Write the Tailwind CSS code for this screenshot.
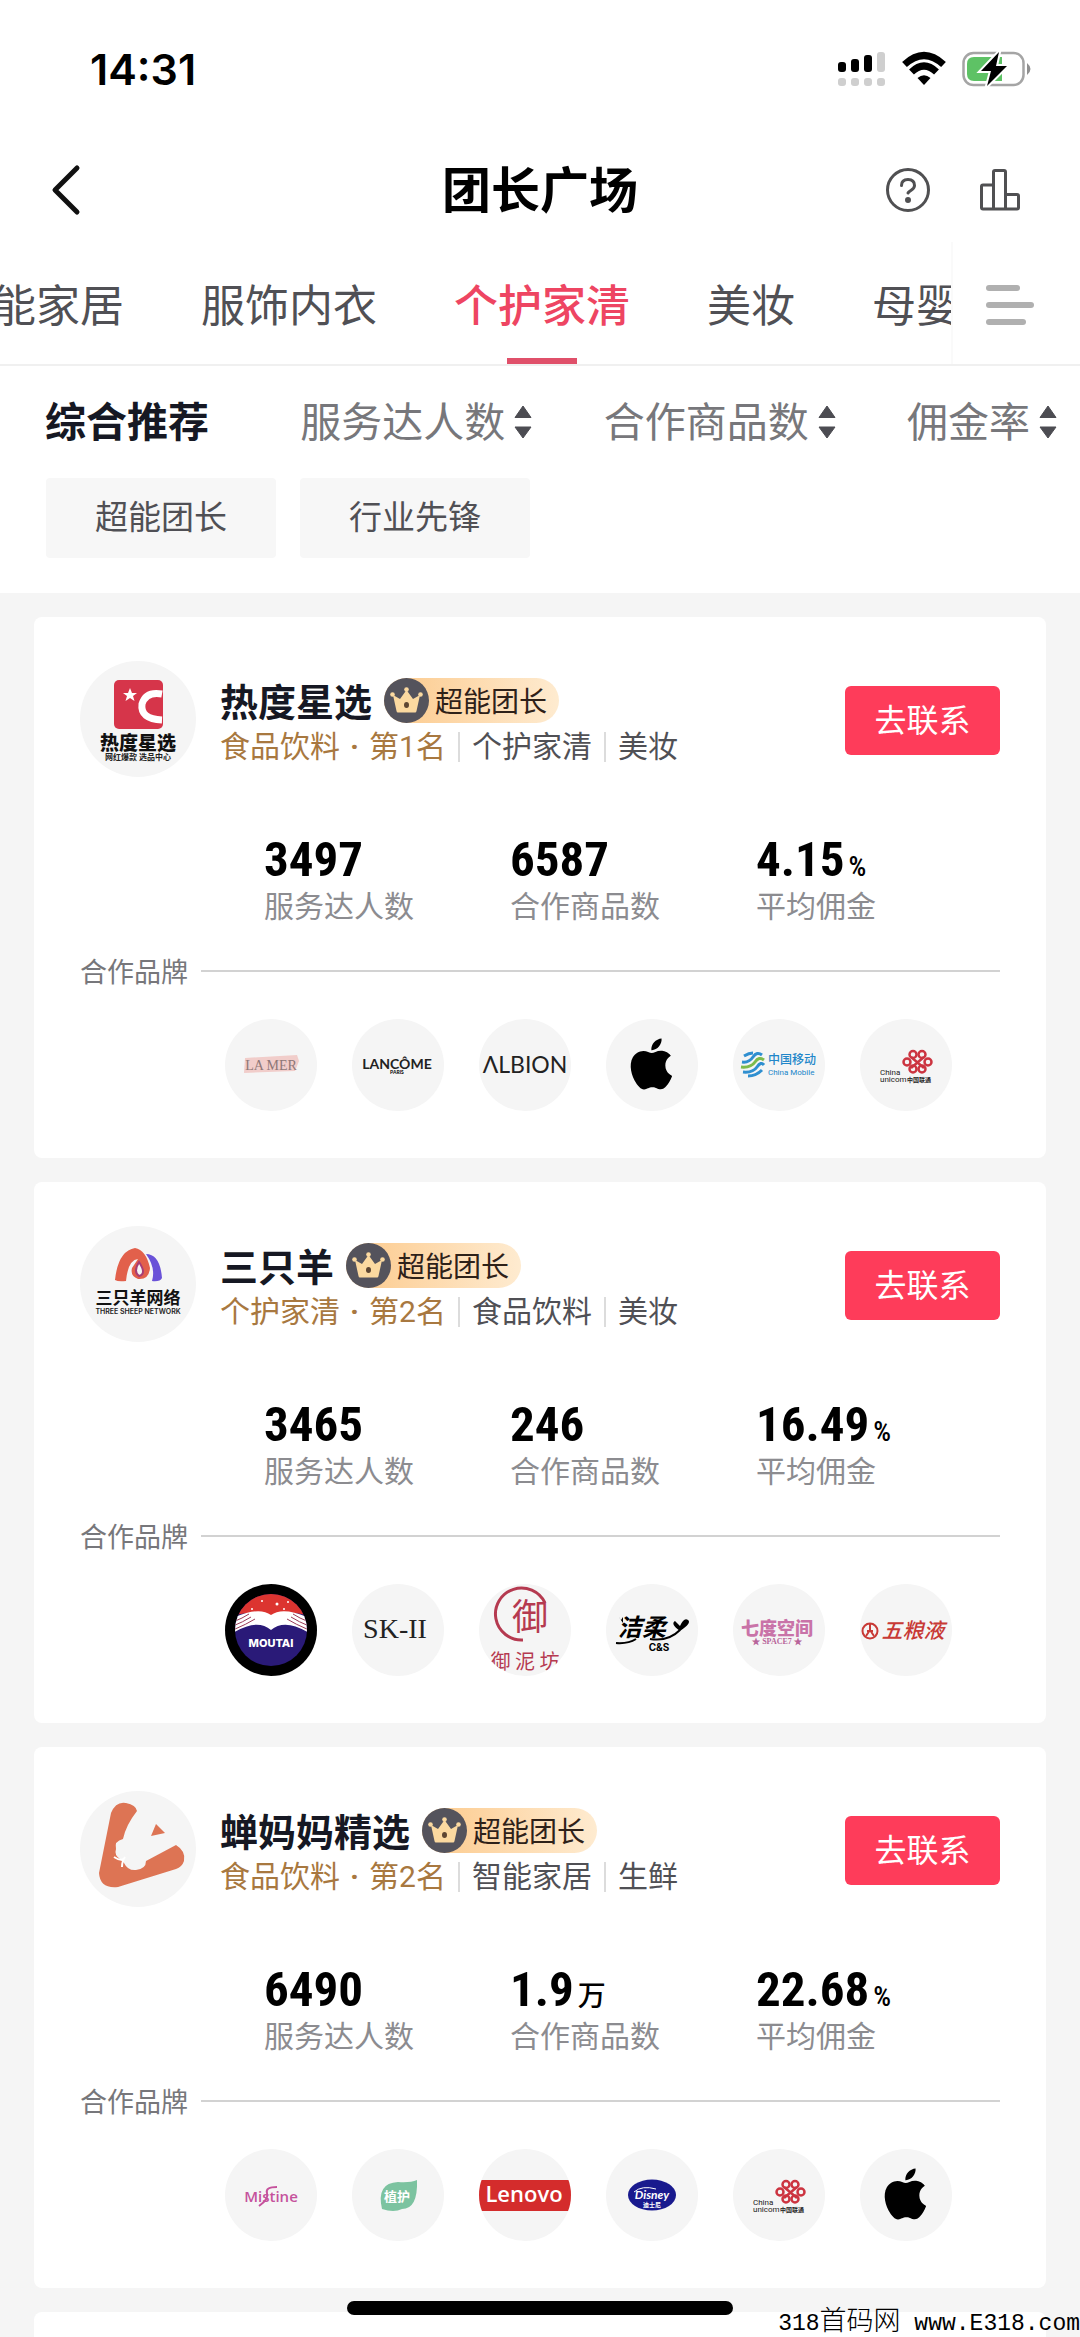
<!DOCTYPE html>
<html lang="zh-CN">
<head>
  <meta charset="UTF-8" />
  <meta name="viewport" content="width=device-width, initial-scale=1.0"/>
  <title>团长广场</title>
  <script src="https://cdn.jsdelivr.net/npm/@tailwindcss/browser@4"></script>
</head>
<body class="relative flex h-screen flex-col overflow-hidden bg-[#f5f5f5] font-['Noto_Sans_CJK_SC',sans-serif] text-[#161823]">

  <!-- shared icons -->
  <svg class="hidden">
    <symbol id="arrows" viewBox="0 0 18 34">
      <path d="M9 1 17 12.500H1zM9 33 1 22H17z" fill="#4c4c52" stroke="#4c4c52" stroke-linejoin="round"/>
    </symbol>
    <symbol id="crown" viewBox="0 0 45 45">
      <circle cx="22.500" cy="22.500" r="22.500" fill="#54535c"/>
      <path d="M9 17 16 21 22.500 12 29 21 36 17 32.500 33Q32.300 34.500 31 34.500H14Q12.700 34.500 12.500 33z" fill="#fbd9a0"/>
      <circle cx="8.500" cy="16.500" r="2.300" fill="#fbd9a0"/>
      <circle cx="22.500" cy="11.500" r="2.300" fill="#fbd9a0"/>
      <circle cx="36.500" cy="16.500" r="2.300" fill="#fbd9a0"/>
      <ellipse cx="22.500" cy="27" rx="2.500" ry="3" fill="#5d4632"/>
    </symbol>
    <symbol id="apple" viewBox="0 0 92 92">
      <path transform="translate(20 19.500) scale(2.120)" d="M12.152 6.896c-.948 0-2.415-1.078-3.960-1.040-2.040.027-3.910 1.183-4.961 3.014-2.117 3.675-.546 9.103 1.519 12.090 1.013 1.454 2.208 3.090 3.792 3.039 1.520-.065 2.090-.987 3.935-.987 1.831 0 2.350.987 3.960.948 1.637-.026 2.676-1.480 3.676-2.948 1.156-1.688 1.636-3.325 1.662-3.415-.039-.013-3.182-1.221-3.220-4.857-.026-3.040 2.480-4.494 2.597-4.559-1.429-2.090-3.623-2.324-4.390-2.376-2-.156-3.675 1.090-4.610 1.090zM15.530 3.830c.843-1.012 1.400-2.427 1.245-3.830-1.207.052-2.662.805-3.532 1.818-.780.896-1.454 2.338-1.273 3.714 1.338.104 2.715-.688 3.559-1.701"/>
    </symbol>
    <symbol id="unicom" viewBox="0 0 92 92">
      <g fill="none" stroke="#cc3440" stroke-width="2.500">
        <path d="M51 38 64 49M64 38 51 49"/>
        <circle cx="53" cy="35.500" r="3.500"/><circle cx="62" cy="35.500" r="3.500"/>
        <circle cx="53" cy="50" r="3.500"/><circle cx="62" cy="50" r="3.500"/>
        <circle cx="47" cy="43" r="3.500"/><circle cx="68" cy="43" r="3.500"/>
      </g>
      <text x="20" y="56" font-size="8" font-family="Roboto" fill="#222">China</text>
      <text x="20" y="63" font-size="8" font-family="Roboto" fill="#222">unicom</text>
      <text x="47" y="63" font-size="6" font-weight="700" fill="#222">中国联通</text>
    </symbol>
  </svg>

  <header class="bg-white">
    <!-- status bar -->
    <div class="flex h-[138px] items-center justify-between pr-[48px] pl-[90px]">
      <span class="font-['Inter',sans-serif] text-[43px] font-semibold text-black">14:31</span>
      <div class="flex items-center gap-4">
        <svg class="h-[36px] w-[48px]" viewBox="0 0 48 36">
          <rect x="0" y="11" width="8" height="10" rx="3"/><rect x="13" y="8" width="8" height="13" rx="3"/><rect x="26" y="4" width="8" height="17" rx="3"/>
          <g fill="#cfcfcf"><rect x="39" y="1" width="8" height="20" rx="3"/><rect x="0" y="27" width="8" height="8" rx="3"/><rect x="13" y="27" width="8" height="8" rx="3"/><rect x="26" y="27" width="8" height="8" rx="3"/><rect x="39" y="27" width="8" height="8" rx="3"/></g>
        </svg>
        <svg class="h-[36px] w-[44px]" viewBox="0 0 44 36" fill="none" stroke="#000" stroke-width="7">
          <path d="M2.500 13.500Q22-4.500 41.500 13.500"/><path d="M9.500 21Q22 9 34.500 21"/>
          <path d="M22 34 15.500 27Q22 21.500 28.500 27z" fill="#000" stroke="none"/>
        </svg>
        <svg class="h-[36px] w-[70px]" viewBox="0 0 70 36">
          <rect x="1.500" y="2" width="60" height="32" rx="10" fill="#fff" stroke="#a5a5a5" stroke-width="2.500"/>
          <path d="M12 6H40V30H12Q5 30 5 23V13Q5 6 12 6z" fill="#5ec265"/>
          <path d="M65 12Q72 18 65 24z" fill="#8f8f8f"/>
          <path d="M37 1 19 20H29L25 35 45 15H34z" stroke="#fff" stroke-width="4" paint-order="stroke"/>
        </svg>
      </div>
    </div>

    <!-- title bar -->
    <div class="grid h-[104px] grid-cols-3 items-center px-[50px]">
      <button type="button" aria-label="返回" class="justify-self-start">
        <svg class="h-[52px] w-[32px]" viewBox="0 0 32 52" fill="none" stroke="#111" stroke-width="5" stroke-linecap="round" stroke-linejoin="round"><path d="M27 4 5 26 27 48"/></svg>
      </button>
      <h1 class="pb-[8px] text-center text-[49px] leading-none font-bold text-black">团长广场</h1>
      <div class="flex items-center justify-end gap-[48px] pr-[9px]">
        <button type="button" aria-label="帮助">
          <svg class="size-[46px]" viewBox="0 0 46 46" fill="none" stroke="#505052" stroke-width="3" stroke-linecap="round"><circle cx="23" cy="23" r="20.500"/><path d="M16.500 18.500Q16.500 12.500 23 12.500T29.500 18.500Q29.500 21 26.500 23T23 26"/><circle cx="23" cy="33" r="1.500" fill="#505052"/></svg>
        </button>
        <button type="button" aria-label="榜单">
          <svg class="h-[46px] w-[42px]" viewBox="0 0 42 46" fill="none" stroke="#505052" stroke-width="3" stroke-linejoin="round"><path d="M14.500 42V5Q14.500 3.500 16 3.500H25Q26.500 3.500 26.500 5V42M14.500 18H4Q2.500 18 2.500 19.500V40.500Q2.500 42 4 42H38Q39.500 42 39.500 40.500V29Q39.500 27.500 38 27.500H26.500"/></svg>
        </button>
      </div>
    </div>

    <!-- category tabs -->
    <div class="flex h-[124px] border-b-2 border-[#f0f0f0]">
      <nav class="flex flex-1 justify-start gap-[77px] overflow-hidden text-[44px] leading-[122px] whitespace-nowrap text-[#505055]">
        <a href="#" class="-ml-[52px]">智能家居</a>
        <a href="#">服饰内衣</a>
        <a href="#" class="relative font-medium text-[#ee4562]">个护家清<span class="absolute bottom-0 left-1/2 h-[6px] w-[70px] -translate-x-1/2 bg-[#e0506a]"></span></a>
        <a href="#">美妆</a>
        <a href="#">母婴</a>
      </nav>
      <button type="button" aria-label="全部分类" class="flex w-[129px] flex-col justify-center gap-[11px] border-l-2 border-[#fafafa] pt-[4px] pl-[33px]">
        <span class="h-[6px] w-[34px] rounded bg-[#b0b0b0]"></span>
        <span class="h-[6px] w-[48px] rounded bg-[#b0b0b0]"></span>
        <span class="h-[6px] w-[40px] rounded bg-[#b0b0b0]"></span>
      </button>
    </div>

    <!-- sorting and filters -->
    <div class="flex items-center justify-between pt-[23px] pr-[23px] pl-[45px] text-[41px] leading-[60px] text-[#77777b]">
      <button type="button" class="mr-[20px] font-bold text-[#161823]">综合推荐</button>
      <button type="button" class="flex items-center gap-[9px]">服务达人数<svg class="mt-[6px] h-[34px] w-[18px]"><use href="#arrows"/></svg></button>
      <button type="button" class="flex items-center gap-[9px]">合作商品数<svg class="mt-[6px] h-[34px] w-[18px]"><use href="#arrows"/></svg></button>
      <button type="button" class="flex items-center gap-[9px]">佣金率<svg class="mt-[6px] h-[34px] w-[18px]"><use href="#arrows"/></svg></button>
    </div>
    <div class="flex gap-6 px-[46px] pt-[29px] pb-[35px] text-[33px] text-[#505055]">
      <button type="button" class="h-[80px] w-[230px] rounded-sm bg-[#f7f7f7] pb-[4px]">超能团长</button>
      <button type="button" class="h-[80px] w-[230px] rounded-sm bg-[#f7f7f7] pb-[4px]">行业先锋</button>
    </div>
  </header>

  <main class="flex flex-1 flex-col gap-6 overflow-hidden px-[34px] pt-6">

    <article class="shrink-0 rounded-lg bg-white px-[46px] pt-[44px] pb-[47px]">
      <div class="flex h-[117px] items-start">
        <svg class="size-[116px] rounded-full bg-[#f5f5f5]" viewBox="0 0 116 116">
          <rect x="34" y="19" width="49" height="49" rx="5" fill="#d6354a"/>
          <path d="M82 33Q66 30 62 43 60 58 82 59" fill="none" stroke="#fff" stroke-width="7"/>
          <path d="M50 27 52 32H57L53 35 54.500 40 50 37 45.500 40 47 35 43 32H48z" fill="#fff"/>
          <text x="58" y="89" text-anchor="middle" font-size="19" font-weight="900" fill="#111">热度星选</text>
          <text x="58" y="99" text-anchor="middle" font-size="8" font-weight="700" fill="#222">网红爆款  选品中心</text>
        </svg>
        <div class="ml-6 flex-1 pt-4">
          <div class="flex h-[46px] items-center gap-[12px]">
            <h2 class="text-[38px] leading-none font-bold">热度星选</h2>
            <span class="flex h-[45px] items-center gap-[6px] rounded-full bg-linear-to-r from-[#fcc98a] to-[#feebd0] pr-[12px] text-[28px] leading-none text-[#2e2119]"><svg class="size-[45px]"><use href="#crown"/></svg>超能团长</span>
          </div>
          <p class="flex items-center pt-[4px] font-['Roboto','Noto_Sans_CJK_SC',sans-serif] text-[30px] leading-[40px] text-[#505055]"><span class="text-[#a87840]">食品饮料<b class="px-[10px]">·</b>第1名</span><i class="mx-[12px] h-[30px] w-[2px] bg-[#dcdcdc]"></i>个护家清<i class="mx-[12px] h-[30px] w-[2px] bg-[#dcdcdc]"></i>美妆</p>
        </div>
        <button type="button" class="mt-[25px] h-[69px] w-[155px] rounded-md bg-[#fe3c5a] pb-[6px] text-[32px] text-white">去联系</button>
      </div>
      <dl class="grid grid-cols-[246px_246px_1fr] pt-[56px] pl-[184px]">
        <div class="flex flex-col-reverse justify-end"><dt class="text-[30px] leading-[36px] text-[#8c8c90]">服务达人数</dt><dd class="font-['Roboto_Condensed','Roboto',sans-serif] text-[49px] leading-[52px] font-bold text-black">3497</dd></div>
        <div class="flex flex-col-reverse justify-end"><dt class="text-[30px] leading-[36px] text-[#8c8c90]">合作商品数</dt><dd class="font-['Roboto_Condensed','Roboto',sans-serif] text-[49px] leading-[52px] font-bold text-black">6587</dd></div>
        <div class="flex flex-col-reverse justify-end"><dt class="text-[30px] leading-[36px] text-[#8c8c90]">平均佣金</dt><dd class="font-['Roboto_Condensed','Roboto',sans-serif] text-[49px] leading-[52px] font-bold text-black">4.15<small class="ml-1 text-[28px] leading-none font-medium">%</small></dd></div>
      </dl>
      <div class="flex items-center gap-[13px] pt-[29px] text-[27px] leading-[40px] text-[#77777b]">合作品牌<span class="h-[2px] flex-1 bg-[#d2d2d2]"></span></div>
      <div class="flex gap-[35px] pt-[28px] pl-[145px]">
        <svg class="size-[92px] rounded-full bg-[#f5f5f5]" viewBox="0 0 92 92"><path d="M20 39 72 36 74 42 70 52 19 54z" fill="#f1cdca"/><text x="46" y="51" text-anchor="middle" font-size="14" font-family="Liberation Serif" fill="#8e7777">LA MER</text></svg>
        <svg class="size-[92px] rounded-full bg-[#f5f5f5]" viewBox="0 0 92 92"><text x="45" y="50" text-anchor="middle" font-size="14" font-family="Lato" font-weight="700" fill="#222">LANCÔME</text><text x="45" y="55" text-anchor="middle" font-size="5" font-family="Lato" font-weight="700">PARIS</text></svg>
        <svg class="size-[92px] rounded-full bg-[#f5f5f5]" viewBox="0 0 92 92"><text x="46" y="54" text-anchor="middle" font-size="23" font-family="Lato" fill="#222">ΛLBION</text></svg>
        <svg class="size-[92px] rounded-full bg-[#f5f5f5]"><use href="#apple"/></svg>
        <svg class="size-[92px] rounded-full bg-[#f5f5f5]" viewBox="0 0 92 92"><g fill="none" stroke-width="3"><path d="M9 43Q16 44 20 38T29 36" stroke="#2f8fd0"/><path d="M8 48Q18 49 22 43T31 41" stroke="#7dbb4c"/><path d="M10 53Q20 54 24 48T31 46" stroke="#2f8fd0"/><path d="M15 57Q23 57 29 51M11 37Q16 34 20 34" stroke="#2f8fd0"/></g><text x="35" y="45" font-size="12" font-weight="500" fill="#2186c9">中国移动</text><text x="35" y="56" font-size="8" font-family="Roboto" fill="#2186c9">China Mobile</text></svg>
        <svg class="size-[92px] rounded-full bg-[#f5f5f5]"><use href="#unicom"/></svg>
      </div>
    </article>

    <article class="shrink-0 rounded-lg bg-white px-[46px] pt-[44px] pb-[47px]">
      <div class="flex h-[117px] items-start">
        <svg class="size-[116px] rounded-full bg-[#f5f5f5]" viewBox="0 0 116 116">
          <path d="M66 28Q80 28 82 52 80 56 72 55 76 42 66 28z" fill="#6a52d8"/>
          <path d="M35 54Q38 25 55 22 66 24 70 42 69 54 58 53 50 50 52 42L58 33Q48 34 46 55 38 56 35 54z" fill="#e2604b"/>
          <path d="M59 36Q53 46 59 50 67 48 59 36z" fill="#f5f5f5" stroke="#a83d76" stroke-width="2"/>
          <text x="58" y="78" text-anchor="middle" font-size="17" font-weight="700" fill="#111">三只羊网络</text>
          <text x="58" y="88" text-anchor="middle" font-size="7" font-weight="600" font-family="Inter" fill="#222">THREE SHEEP NETWORK</text>
        </svg>
        <div class="ml-6 flex-1 pt-4">
          <div class="flex h-[46px] items-center gap-[12px]">
            <h2 class="text-[38px] leading-none font-bold">三只羊</h2>
            <span class="flex h-[45px] items-center gap-[6px] rounded-full bg-linear-to-r from-[#fcc98a] to-[#feebd0] pr-[12px] text-[28px] leading-none text-[#2e2119]"><svg class="size-[45px]"><use href="#crown"/></svg>超能团长</span>
          </div>
          <p class="flex items-center pt-[4px] font-['Roboto','Noto_Sans_CJK_SC',sans-serif] text-[30px] leading-[40px] text-[#505055]"><span class="text-[#a87840]">个护家清<b class="px-[10px]">·</b>第2名</span><i class="mx-[12px] h-[30px] w-[2px] bg-[#dcdcdc]"></i>食品饮料<i class="mx-[12px] h-[30px] w-[2px] bg-[#dcdcdc]"></i>美妆</p>
        </div>
        <button type="button" class="mt-[25px] h-[69px] w-[155px] rounded-md bg-[#fe3c5a] pb-[6px] text-[32px] text-white">去联系</button>
      </div>
      <dl class="grid grid-cols-[246px_246px_1fr] pt-[56px] pl-[184px]">
        <div class="flex flex-col-reverse justify-end"><dt class="text-[30px] leading-[36px] text-[#8c8c90]">服务达人数</dt><dd class="font-['Roboto_Condensed','Roboto',sans-serif] text-[49px] leading-[52px] font-bold text-black">3465</dd></div>
        <div class="flex flex-col-reverse justify-end"><dt class="text-[30px] leading-[36px] text-[#8c8c90]">合作商品数</dt><dd class="font-['Roboto_Condensed','Roboto',sans-serif] text-[49px] leading-[52px] font-bold text-black">246</dd></div>
        <div class="flex flex-col-reverse justify-end"><dt class="text-[30px] leading-[36px] text-[#8c8c90]">平均佣金</dt><dd class="font-['Roboto_Condensed','Roboto',sans-serif] text-[49px] leading-[52px] font-bold text-black">16.49<small class="ml-1 text-[28px] leading-none font-medium">%</small></dd></div>
      </dl>
      <div class="flex items-center gap-[13px] pt-[29px] text-[27px] leading-[40px] text-[#77777b]">合作品牌<span class="h-[2px] flex-1 bg-[#d2d2d2]"></span></div>
      <div class="flex gap-[35px] pt-[28px] pl-[145px]">
        <svg class="size-[92px] rounded-full bg-black" viewBox="0 0 92 92">
          <clipPath id="moutai"><circle cx="46" cy="46" r="36"/></clipPath>
          <g clip-path="url(#moutai)"><rect width="92" height="92" fill="#2a1a78"/><path d="M0 0H92V34Q60 24 46 32 32 24 0 34z" fill="#dc3430"/><path d="M8 34Q34 22 46 31 58 22 84 34V49Q60 34 46 46 32 34 8 49z" fill="#fff"/><path d="M8 38Q18 34 24 30M8 42Q18 38 26 33M8 46Q22 40 30 35M84 38Q74 34 68 30M84 42Q74 38 66 33M84 46Q70 40 62 35" fill="none" stroke="#9a3a56"/></g>
          <g fill="#fff"><circle cx="37" cy="17" r="1"/><circle cx="52" cy="20" r="1.500"/><circle cx="63" cy="18" r="1"/><circle cx="27" cy="25" r="1"/><circle cx="59" cy="25" r="1"/></g>
          <text x="46" y="63" text-anchor="middle" font-size="11" font-weight="800" font-family="Inter" fill="#fff">MOUTAI</text>
        </svg>
        <svg class="size-[92px] rounded-full bg-[#f5f5f5]" viewBox="0 0 92 92"><text x="43" y="54" text-anchor="middle" font-size="28" font-family="Liberation Serif" fill="#222">SK-II</text></svg>
        <svg class="size-[92px] rounded-full bg-[#f5f5f5]" viewBox="0 0 92 92"><path d="M66 19A26 26 0 1 0 44 56" fill="none" stroke="#b53a50" stroke-width="3"/><text x="51" y="46" text-anchor="middle" font-size="36" font-weight="400" fill="#b53a50">御</text><text x="46" y="85" text-anchor="middle" font-size="20" fill="#b53a50" xml:space="preserve">御 泥 坊</text></svg>
        <svg class="size-[92px] rounded-full bg-[#f5f5f5]" viewBox="0 0 92 92"><text x="36" y="52" text-anchor="middle" font-size="24" font-weight="700" font-style="italic">洁柔</text><path d="M10 59Q22 60 30 55M44 55Q62 58 74 46" fill="none" stroke="#000" stroke-width="2"/><path d="M74 47Q64 40 69 37L74 42Q78 33 82 36T74 47zM12 32 15 36 17 33 17 39z"/><text x="53" y="67" text-anchor="middle" font-size="10" font-weight="700" font-family="Inter">C&amp;S</text></svg>
        <svg class="size-[92px] rounded-full bg-[#f5f5f5]" viewBox="0 0 92 92"><text x="44" y="51" text-anchor="middle" font-size="18" font-weight="900" fill="#c973a8">七度空间</text><text x="44" y="60" text-anchor="middle" font-size="8" font-weight="700" font-family="Liberation Serif" fill="#b8649a">★ SPACE7 ★</text></svg>
        <svg class="size-[92px] rounded-full bg-[#f5f5f5]" viewBox="0 0 92 92"><g fill="none" stroke="#c83a36" stroke-width="2"><circle cx="10" cy="47" r="7.500"/><path d="M10 40V46L6 52M10 46 14 52M7 47H13"/></g><text x="53" y="54" text-anchor="middle" font-size="21" font-weight="500" font-style="italic" fill="#c83a36">五粮液</text></svg>
      </div>
    </article>

    <article class="shrink-0 rounded-lg bg-white px-[46px] pt-[44px] pb-[47px]">
      <div class="flex h-[117px] items-start">
        <svg class="size-[116px] rounded-full bg-[#f5f5f5]" viewBox="0 0 116 116">
          <path d="M46 12Q56 14 57 20 46 34 43 48 34 50 36 58 34 64 40 68L44 72Q48 80 56 79 66 78 66 70L96 54Q106 60 104 70 102 76 96 78L38 96Q20 98 19 82L31 22Q36 10 46 12z" fill="#dd7454"/>
          <path d="M76 33 85 42 71 45z" fill="#dd7454"/>
          <path d="M34 66Q40 70 44 68M42 76Q42 70 45 66" fill="none" stroke="#fff" stroke-width="2"/>
        </svg>
        <div class="ml-6 flex-1 pt-4">
          <div class="flex h-[46px] items-center gap-[12px]">
            <h2 class="text-[38px] leading-none font-bold">蝉妈妈精选</h2>
            <span class="flex h-[45px] items-center gap-[6px] rounded-full bg-linear-to-r from-[#fcc98a] to-[#feebd0] pr-[12px] text-[28px] leading-none text-[#2e2119]"><svg class="size-[45px]"><use href="#crown"/></svg>超能团长</span>
          </div>
          <p class="flex items-center pt-[4px] font-['Roboto','Noto_Sans_CJK_SC',sans-serif] text-[30px] leading-[40px] text-[#505055]"><span class="text-[#a87840]">食品饮料<b class="px-[10px]">·</b>第2名</span><i class="mx-[12px] h-[30px] w-[2px] bg-[#dcdcdc]"></i>智能家居<i class="mx-[12px] h-[30px] w-[2px] bg-[#dcdcdc]"></i>生鲜</p>
        </div>
        <button type="button" class="mt-[25px] h-[69px] w-[155px] rounded-md bg-[#fe3c5a] pb-[6px] text-[32px] text-white">去联系</button>
      </div>
      <dl class="grid grid-cols-[246px_246px_1fr] pt-[56px] pl-[184px]">
        <div class="flex flex-col-reverse justify-end"><dt class="text-[30px] leading-[36px] text-[#8c8c90]">服务达人数</dt><dd class="font-['Roboto_Condensed','Roboto',sans-serif] text-[49px] leading-[52px] font-bold text-black">6490</dd></div>
        <div class="flex flex-col-reverse justify-end"><dt class="text-[30px] leading-[36px] text-[#8c8c90]">合作商品数</dt><dd class="font-['Roboto_Condensed','Roboto',sans-serif] text-[49px] leading-[52px] font-bold text-black">1.9<small class="ml-1 font-['Noto_Sans_CJK_SC',sans-serif] text-[28px] leading-none font-medium">万</small></dd></div>
        <div class="flex flex-col-reverse justify-end"><dt class="text-[30px] leading-[36px] text-[#8c8c90]">平均佣金</dt><dd class="font-['Roboto_Condensed','Roboto',sans-serif] text-[49px] leading-[52px] font-bold text-black">22.68<small class="ml-1 text-[28px] leading-none font-medium">%</small></dd></div>
      </dl>
      <div class="flex items-center gap-[13px] pt-[29px] text-[27px] leading-[40px] text-[#77777b]">合作品牌<span class="h-[2px] flex-1 bg-[#d2d2d2]"></span></div>
      <div class="flex gap-[35px] pt-[28px] pl-[145px]">
        <svg class="size-[92px] rounded-full bg-[#f5f5f5]" viewBox="0 0 92 92"><text x="46" y="53" text-anchor="middle" font-size="15" font-weight="600" font-family="Open Sans" fill="#c5529c">Mistine</text><path d="M52 38Q40 38 42 44T34 57" fill="none" stroke="#c5529c" stroke-width="2"/></svg>
        <svg class="size-[92px] rounded-full bg-[#f5f5f5]" viewBox="0 0 92 92"><path d="M65 31Q66 60 50 60 42 64 30 60 24 34 46 33 58 34 65 31z" fill="#7cc3a0"/><text x="45" y="52" text-anchor="middle" font-size="13" font-weight="700" fill="#fff">植护</text></svg>
        <svg class="size-[92px] rounded-full bg-[#f5f5f5]" viewBox="0 0 92 92"><rect y="31" width="92" height="31" fill="#d42c2c"/><text x="45" y="53" text-anchor="middle" font-size="22" font-weight="600" font-family="Open Sans" fill="#fff">Lenovo</text></svg>
        <svg class="size-[92px] rounded-full bg-[#f5f5f5]" viewBox="0 0 92 92"><ellipse cx="46" cy="46" rx="24" ry="15.500" fill="#191a8e"/><path d="M28 43Q36 36 50 40" fill="none" stroke="#fff"/><text x="46" y="50" text-anchor="middle" font-size="12" font-weight="700" font-style="italic" font-family="Lato" fill="#fff">Disney</text><text x="46" y="58" text-anchor="middle" font-size="6" font-weight="700" fill="#fff">迪士尼</text></svg>
        <svg class="size-[92px] rounded-full bg-[#f5f5f5]"><use href="#unicom"/></svg>
        <svg class="size-[92px] rounded-full bg-[#f5f5f5]"><use href="#apple"/></svg>
      </div>
    </article>

    <article class="h-[541px] shrink-0 rounded-lg bg-white"></article>
  </main>

  <!-- home indicator and site mark, over the list -->
  <div class="absolute bottom-[22px] left-1/2 h-[14px] w-[386px] -translate-x-1/2 rounded-full bg-black"></div>
  <p class="absolute right-0 bottom-0 font-['Liberation_Mono','Noto_Sans_CJK_SC',monospace] text-[23px] leading-[26px] whitespace-nowrap text-black">318<span class="text-[27px] font-light">首码网</span> www.E318.com</p>
</body>
</html>
